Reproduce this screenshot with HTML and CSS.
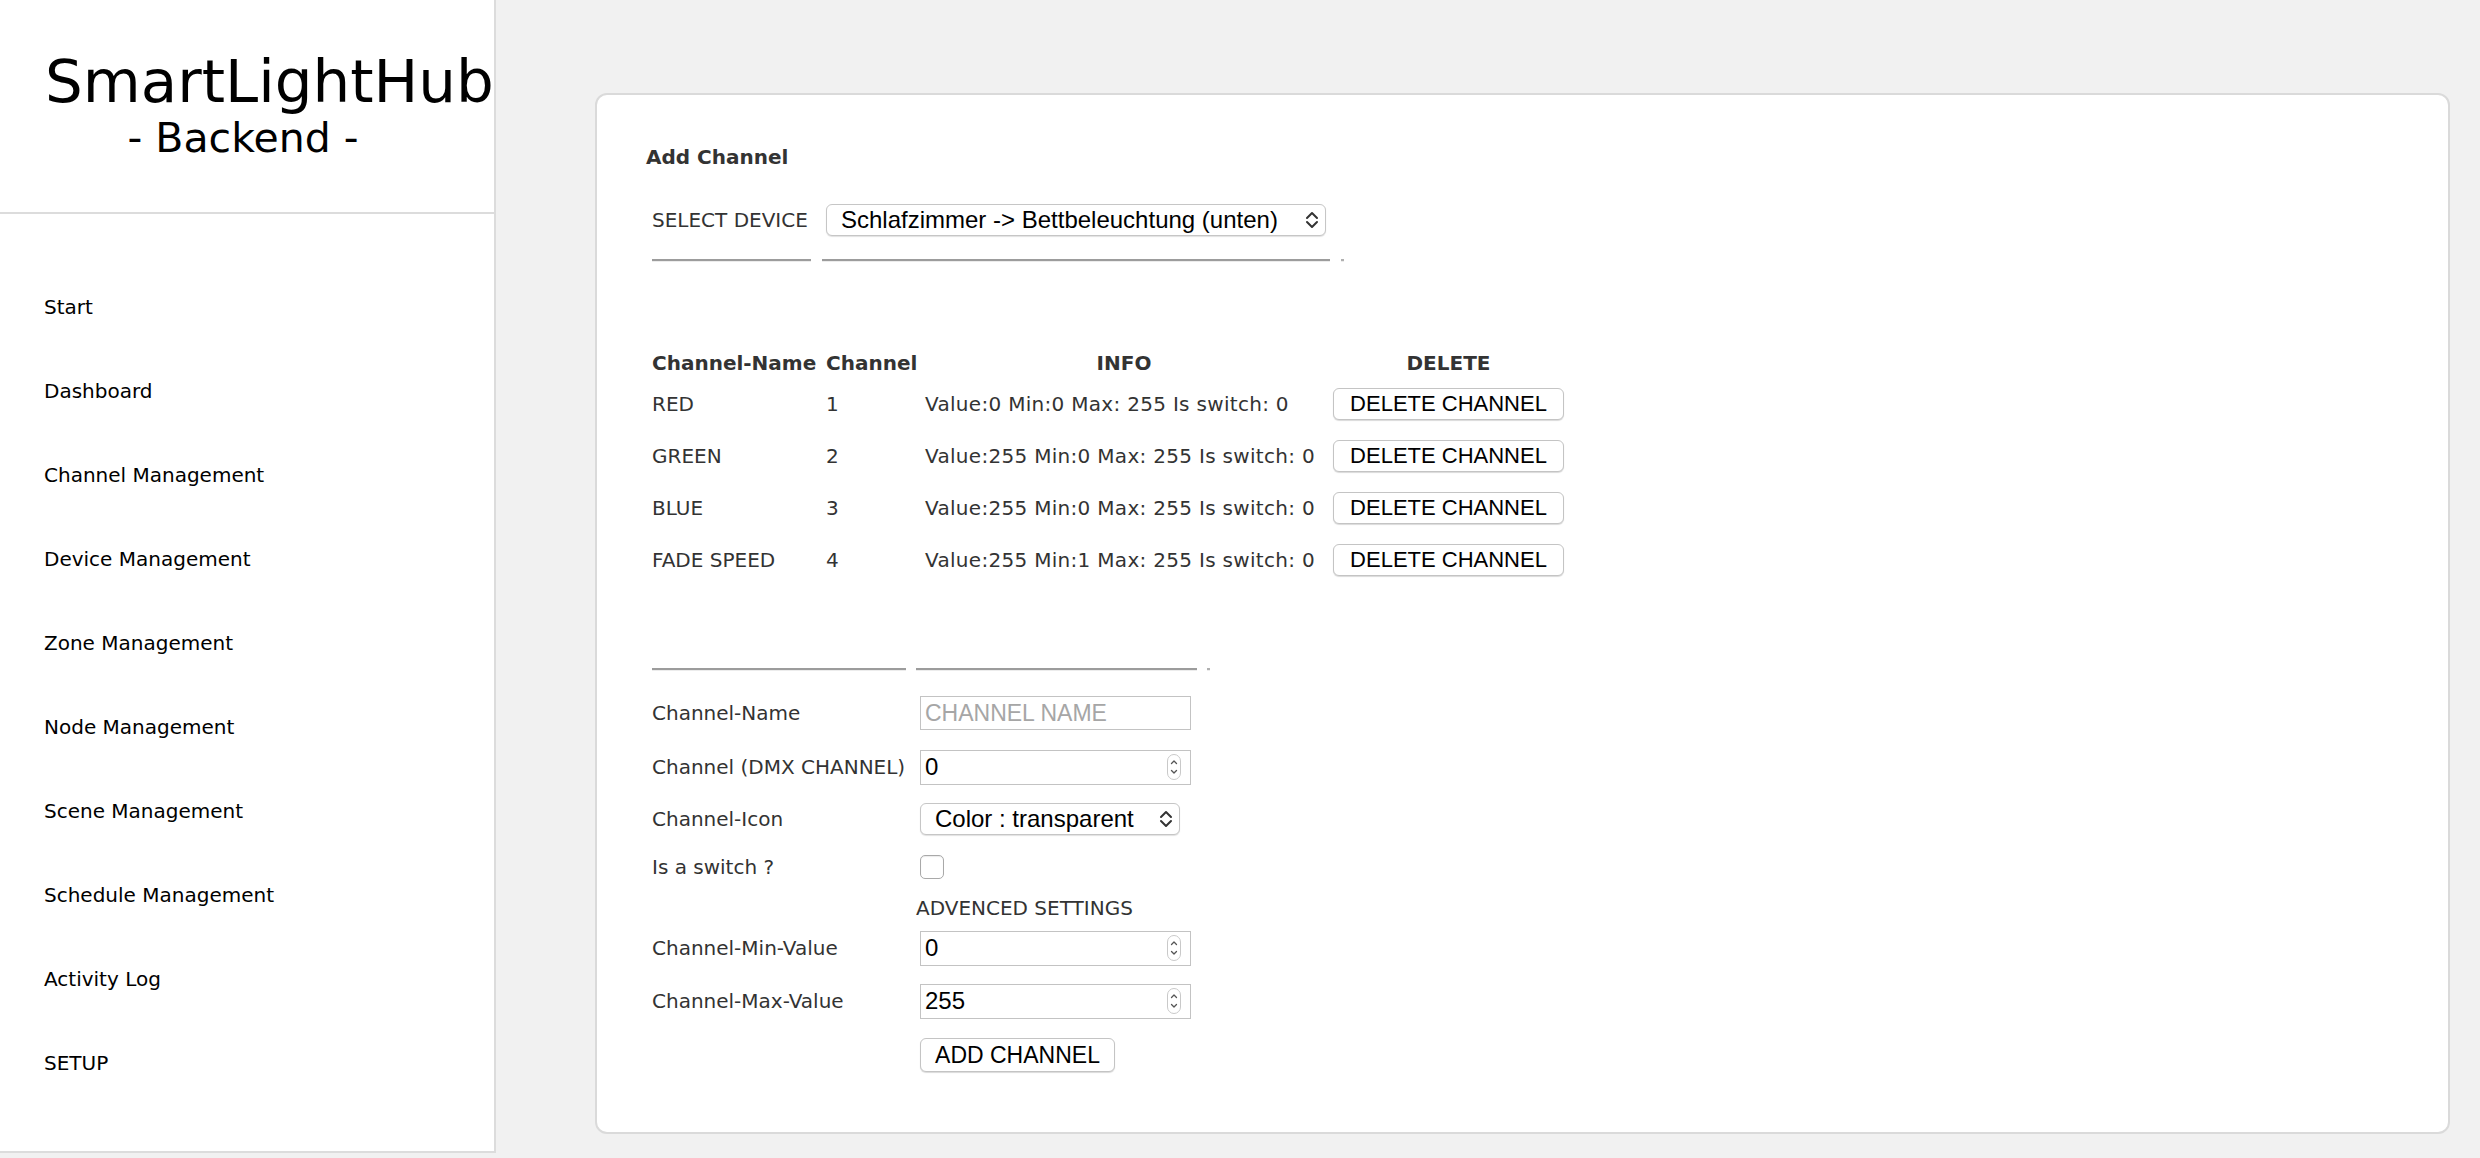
FILE: index.html
```html
<!DOCTYPE html>
<html lang="de">
<head>
<meta charset="utf-8">
<title>SmartLightHub - Backend</title>
<link rel="stylesheet" href="styles.css">
</head>
<body>
<div class="layout">
  <aside class="sidebar">
    <header class="brand">
      <div class="brand-title">SmartLightHub</div>
      <div class="brand-sub">- Backend -</div>
    </header>
    <nav class="nav">
      <a class="nav-item">Start</a>
      <a class="nav-item">Dashboard</a>
      <a class="nav-item">Channel Management</a>
      <a class="nav-item">Device Management</a>
      <a class="nav-item">Zone Management</a>
      <a class="nav-item">Node Management</a>
      <a class="nav-item">Scene Management</a>
      <a class="nav-item">Schedule Management</a>
      <a class="nav-item">Activity Log</a>
      <a class="nav-item">SETUP</a>
    </nav>
  </aside>

  <main class="main">
    <section class="card">
      <h2 class="card-title">Add Channel</h2>

      <div class="device-row">
        <div class="device-label">SELECT DEVICE</div>
        <div class="device-cell">
          <div class="select select-device">
            <span class="select-text">Schlafzimmer -&gt; Bettbeleuchtung (unten)</span>
            <svg class="chev" width="14" height="20" viewBox="0 0 14 20"><path d="M2 8 L7 3 L12 8 M2 12 L7 17 L12 12" fill="none" stroke="#333" stroke-width="2" stroke-linecap="round" stroke-linejoin="round"/></svg>
          </div>
        </div>
      </div>
      <div class="rules rules-device">
        <span class="rule rule-a"></span>
        <span class="rule rule-b"></span>
        <span class="rule rule-tick"></span>
      </div>

      <div class="channels">
        <div class="ch-row ch-head">
          <div class="th">Channel-Name</div>
          <div class="th">Channel</div>
          <div class="th th-info">INFO</div>
          <div class="th th-del">DELETE</div>
        </div>
        <div class="ch-row">
          <div>RED</div><div>1</div>
          <div class="info">Value:0 Min:0 Max: 255 Is switch: 0</div>
          <div><button class="btn btn-del">DELETE CHANNEL</button></div>
        </div>
        <div class="ch-row">
          <div>GREEN</div><div>2</div>
          <div class="info">Value:255 Min:0 Max: 255 Is switch: 0</div>
          <div><button class="btn btn-del">DELETE CHANNEL</button></div>
        </div>
        <div class="ch-row">
          <div>BLUE</div><div>3</div>
          <div class="info">Value:255 Min:0 Max: 255 Is switch: 0</div>
          <div><button class="btn btn-del">DELETE CHANNEL</button></div>
        </div>
        <div class="ch-row">
          <div>FADE SPEED</div><div>4</div>
          <div class="info">Value:255 Min:1 Max: 255 Is switch: 0</div>
          <div><button class="btn btn-del">DELETE CHANNEL</button></div>
        </div>
      </div>

      <div class="rules rules-form">
        <span class="rule rule-c"></span>
        <span class="rule rule-d"></span>
        <span class="rule rule-tick"></span>
      </div>

      <div class="form">
        <div class="f-row r1">
          <div class="f-label">Channel-Name</div>
          <div class="f-field"><input class="text-input" type="text" placeholder="CHANNEL NAME"></div>
        </div>
        <div class="f-row r2">
          <div class="f-label">Channel (DMX CHANNEL)</div>
          <div class="f-field">
            <div class="num-field"><input class="num-input" type="text" value="0"><svg class="spin" width="14" height="26" viewBox="0 0 14 26"><rect x="0.5" y="0.5" width="13" height="25" rx="6.5" fill="#fff" stroke="#c9c9c9"/><path d="M4.5 9.5 L7 7 L9.5 9.5 M4.5 16.5 L7 19 L9.5 16.5" fill="none" stroke="#555" stroke-width="1.3" stroke-linecap="round" stroke-linejoin="round"/></svg></div>
          </div>
        </div>
        <div class="f-row r3">
          <div class="f-label">Channel-Icon</div>
          <div class="f-field">
            <div class="select select-icon">
              <span class="select-text">Color : transparent</span>
              <svg class="chev" width="14" height="20" viewBox="0 0 14 20"><path d="M2 8 L7 3 L12 8 M2 12 L7 17 L12 12" fill="none" stroke="#333" stroke-width="2" stroke-linecap="round" stroke-linejoin="round"/></svg>
            </div>
          </div>
        </div>
        <div class="f-row r4">
          <div class="f-label">Is a switch ?</div>
          <div class="f-field"><span class="checkbox"></span></div>
        </div>
        <div class="f-row r5">
          <div class="f-label"></div>
          <div class="f-adv">ADVENCED SETTINGS</div>
        </div>
        <div class="f-row r6">
          <div class="f-label">Channel-Min-Value</div>
          <div class="f-field">
            <div class="num-field"><input class="num-input" type="text" value="0"><svg class="spin" width="14" height="26" viewBox="0 0 14 26"><rect x="0.5" y="0.5" width="13" height="25" rx="6.5" fill="#fff" stroke="#c9c9c9"/><path d="M4.5 9.5 L7 7 L9.5 9.5 M4.5 16.5 L7 19 L9.5 16.5" fill="none" stroke="#555" stroke-width="1.3" stroke-linecap="round" stroke-linejoin="round"/></svg></div>
          </div>
        </div>
        <div class="f-row r7">
          <div class="f-label">Channel-Max-Value</div>
          <div class="f-field">
            <div class="num-field"><input class="num-input" type="text" value="255"><svg class="spin" width="14" height="26" viewBox="0 0 14 26"><rect x="0.5" y="0.5" width="13" height="25" rx="6.5" fill="#fff" stroke="#c9c9c9"/><path d="M4.5 9.5 L7 7 L9.5 9.5 M4.5 16.5 L7 19 L9.5 16.5" fill="none" stroke="#555" stroke-width="1.3" stroke-linecap="round" stroke-linejoin="round"/></svg></div>
          </div>
        </div>
        <div class="f-row r8">
          <div class="f-label"></div>
          <div class="f-field"><button class="btn btn-add">ADD CHANNEL</button></div>
        </div>
      </div>
    </section>
  </main>
</div>
</body>
</html>
```

FILE: styles.css
```css
* { box-sizing: border-box; }

html, body {
  margin: 0;
  padding: 0;
  height: 100%;
}

body {
  background: #f1f1f1;
  font-family: "DejaVu Sans", Verdana, sans-serif;
  color: #333;
  overflow: hidden;
}

.layout {
  display: flex;
  align-items: flex-start;
  min-height: 1158px;
}

/* ---------- Sidebar ---------- */
.sidebar {
  width: 496px;
  flex: 0 0 496px;
  background: #fff;
  border-right: 2px solid #dcdcdc;
  border-bottom: 2px solid #dcdcdc;
  color: #000;
  padding-bottom: 46px;
}

.brand {
  padding: 52px 0 53px 0;
  border-bottom: 2px solid #dcdcdc;
}

.brand-title {
  font-size: 59.5px;
  line-height: 60px;
  padding-left: 45px;
  white-space: nowrap;
}

.brand-sub {
  font-size: 41px;
  line-height: 41px;
  margin-top: 6px;
  text-align: center;
  padding-right: 8px;
}

.nav {
  display: flex;
  flex-direction: column;
  padding-top: 51px;
}

.nav-item {
  display: block;
  font-size: 20px;
  line-height: 24px;
  padding: 30px 0 30px 44px;
  color: #000;
  text-decoration: none;
}

/* ---------- Main ---------- */
.main {
  flex: 1;
  padding: 93px 30px 24px 99px;
}

.card {
  background: #fff;
  border: 2px solid #dadada;
  border-radius: 12px;
  padding: 46px 0 50px 55px;
  height: 1041px;
}

.card-title {
  margin: 0;
  font-size: 20px;
  line-height: 32px;
  font-weight: bold;
  color: #333;
  margin-left: -6px;
}

.device-row {
  display: flex;
  align-items: center;
  margin-top: 31px;
  height: 32px;
  font-size: 20px;
}

.device-label {
  width: 159px;
  white-space: nowrap;
}

.device-cell {
  width: 508px;
  margin-left: 11px;
  padding: 0 4px;
}

.select {
  display: flex;
  align-items: center;
  justify-content: space-between;
  height: 32px;
  background: #fff;
  border: 1px solid #c6c6c6;
  border-radius: 6px;
  box-shadow: 0 1px 1px rgba(0,0,0,0.12);
  font-family: "Liberation Sans", Arial, sans-serif;
  font-size: 24px;
  color: #000;
  padding: 0 6px 0 14px;
}

.select-text { white-space: nowrap; }

.select-icon {
  width: 260px;
  height: 32px;
}

.chev { flex: 0 0 auto; }

/* ---------- Rules (cell bottom borders) ---------- */
.rules {
  display: flex;
  align-items: flex-start;
  height: 3px;
}

.rules-device { margin-top: 23px; gap: 11px; }
.rules-form { margin-top: 82px; gap: 10px; }

.rule {
  display: block;
  height: 3px;
  border-top: 2px solid #9c9c9c;
  border-bottom: 1px solid #ececec;
}

.rule-a { width: 159px; }
.rule-b { width: 508px; }
.rule-c { width: 254px; }
.rule-d { width: 281px; }
.rule-tick { width: 3px; border-top-color: #b0b0b0; }

/* ---------- Channels table ---------- */
.channels {
  margin-top: 85px;
  font-size: 20px;
}

.ch-row {
  display: grid;
  grid-template-columns: 174px 99px 398px 10px 231px;
  align-items: center;
  height: 52px;
  white-space: nowrap;
}

.ch-row > div:nth-child(4) { grid-column: 5; }

.info { letter-spacing: 0.3px; }

.ch-head {
  height: 32px;
  margin-bottom: -1px;
  font-weight: bold;
}

.th-info, .th-del { text-align: center; }

.btn {
  font-family: "Liberation Sans", Arial, sans-serif;
  font-size: 22px;
  color: #000;
  background: #fff;
  border: 1px solid #c4c4c4;
  border-radius: 6px;
  box-shadow: 0 1px 1px rgba(0,0,0,0.15);
  padding: 0;
  cursor: pointer;
}

.btn-del {
  width: 231px;
  height: 32px;
}

/* ---------- Form ---------- */
.form {
  margin-top: 15px;
  font-size: 20px;
}

.f-row {
  display: grid;
  grid-template-columns: 254px 281px;
  column-gap: 10px;
  align-items: center;
  white-space: nowrap;
}

.r1 { height: 54px; }
.r2 { height: 54px; }
.r3 { height: 50px; }
.r4 { height: 46px; }
.r5 { height: 36px; }
.r6 { height: 44px; }
.r7 { height: 62px; }
.r8 { height: 46px; }

.f-field {
  padding-left: 4px;
  display: flex;
  align-items: center;
}

.f-adv { color: #333; }

.text-input {
  width: 271px;
  height: 34px;
  border: 1px solid #c3c3c3;
  background: #fff;
  font-family: "Liberation Sans", Arial, sans-serif;
  font-size: 23px;
  padding: 0 4px;
  color: #000;
  outline: none;
}

.text-input::placeholder { color: #a6a6a6; }

.num-field {
  display: flex;
  align-items: center;
  width: 271px;
  height: 35px;
  border: 1px solid #c3c3c3;
  background: #fff;
  padding: 0 9px 0 4px;
}

.num-input {
  flex: 1;
  min-width: 0;
  border: 0;
  outline: none;
  padding: 0;
  font-family: "Liberation Sans", Arial, sans-serif;
  font-size: 24px;
  color: #000;
  background: transparent;
}

.spin { flex: 0 0 auto; }

.checkbox {
  display: block;
  width: 24px;
  height: 24px;
  border: 1px solid #a9a9a9;
  border-radius: 5px;
  background: #fff;
  box-shadow: inset 0 1px 1px rgba(0,0,0,0.08);
}

.btn-add {
  width: 195px;
  height: 34px;
  font-size: 23px;
}
```
